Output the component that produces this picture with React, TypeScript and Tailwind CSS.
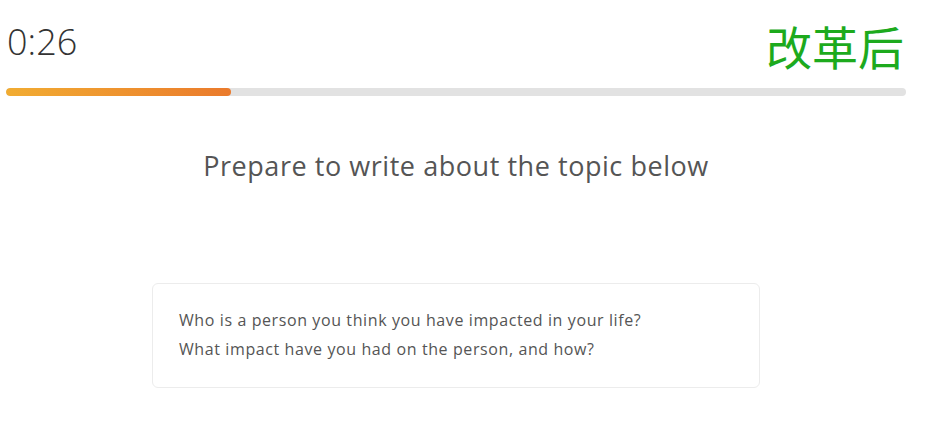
export default function App() {
  return (
    <div className="w-[938px] h-[445px] bg-white overflow-hidden font-['Open_Sans',sans-serif]">
      <div className="w-[912px] px-[6px]">
        <div className="flex items-center justify-between h-[88px] pb-[6px]">
          <span className="text-[36px] font-light leading-none text-[#333] pl-px pt-[2px]">0:26</span>
          <span className="text-[46px] leading-none text-[#1daa1d] font-['Noto_Sans_CJK_SC',sans-serif] pr-[2px] pt-[8px]">
            改革后
          </span>
        </div>
        <div className="h-[8px] rounded-full bg-[#e2e2e2] overflow-hidden">
          <div className="h-full w-[225px] rounded-full bg-gradient-to-r from-[#f1ac32] to-[#ea7a2c]" />
        </div>
        <div className="flex flex-col items-center">
          <h1 className="mt-[52px] text-[27px] leading-[36px] text-[#555] tracking-[0.55px]">
            Prepare to write about the topic below
          </h1>
          <div className="mt-[99px] w-[608px] h-[105px] rounded-[6px] border border-[#ececec] px-[26px] pt-[22px]">
            <p className="text-[16px] leading-[29px] text-[#555] tracking-[0.6px]">
              Who is a person you think you have impacted in your life?
              <br />
              What impact have you had on the person, and how?
            </p>
          </div>
        </div>
      </div>
    </div>
  );
}
